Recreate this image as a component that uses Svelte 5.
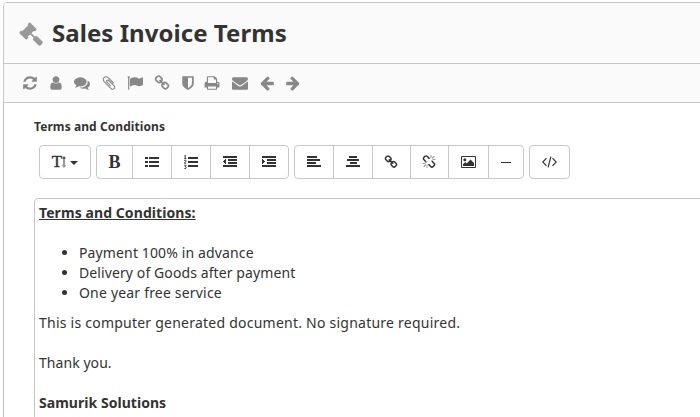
<script>
  const link = 'M1520 1216q0-40-28-68l-208-208q-28-28-68-28-42 0-72 32 3 3 19 18.5t21.5 21.5 15 19 13 25.5 3.5 27.5q0 40-28 68t-68 28q-15 0-27.5-3.5t-25.5-13-19-15-21.5-21.5-18.5-19q-33 31-33 73 0 40 28 68l206 207q27 27 68 27 40 0 68-26l147-146q28-28 28-67zm-703-705q0-40-28-68l-206-207q-28-28-68-28-39 0-68 27l-147 146q-28 28-28 67 0 40 28 68l208 208q27 27 68 27 42 0 72-31-3-3-19-18.5t-21.5-21.5-15-19-13-25.5-3.5-27.5q0-40 28-68t68-28q15 0 27.5 3.5t25.5 13 19 15 21.5 21.5 18.5 19q33-31 33-73zm895 705q0 120-85 203l-147 146q-83 83-203 83-121 0-204-85l-206-207q-83-83-83-203 0-123 88-209l-88-88q-86 88-208 88-120 0-204-84l-208-208q-84-84-84-204t85-203l147-146q83-83 203-83 121 0 204 85l206 207q83 83 83 203 0 123-88 209l88 88q86-88 208-88 120 0 204 84l208 208q84 84 84 204z';
  const arrow = 'M1664 896v128q0 53-32.5 90.5t-84.5 37.5h-704l293 294q38 36 38 90t-38 90l-75 76q-37 37-90 37-52 0-91-37l-651-652q-37-37-37-90 0-52 37-91l651-650q38-38 91-38 52 0 90 38l75 74q38 38 38 91t-38 91l-293 293h704q52 0 84.5 37.5t32.5 90.5z';
  const gavel = 'M1771 1536q0 53-37 90l-107 108q-39 37-91 37-53 0-90-37l-363-364q-38-36-38-90 0-53 43-96l-256-256-126 126q-14 14-34 14t-34-14q2 2 12.5 12t12.5 13 10 11.5 10 13.5 6 13.5 5.5 16.5 1.5 18q0 38-28 68-3 3-16.5 18t-19 20.5-18.5 16.5-22 15.5-22 9-26 4.5q-40 0-68-28l-408-408q-28-28-28-68 0-13 4.5-26t9-22 15.5-22 16.5-18.5 20.5-19 18-16.5q30-28 68-28 10 0 18 1.5t16.5 5.5 13.5 6 13.5 10 11.5 10 13 12.5 12 12.5q-14-14-14-34t14-34l348-348q14-14 34-14t34 14q-2-2-12.5-12t-12.5-13-10-11.5-10-13.5-6-13.5-5.5-16.5-1.5-18q0-38 28-68 3-3 16.5-18t19-20.5 18.5-16.5 22-15.5 22-9 26-4.5q40 0 68 28l408 408q28 28 28 68 0 13-4.5 26t-9 22-15.5 22-16.5 18.5-20.5 19-18 16.5q-30 28-68 28-10 0-18-1.5t-16.5-5.5-13.5-6-13.5-10-11.5-10-13-12.5-12-12.5q14 14 14 34t-14 34l-126 126 256 256q43-43 96-43 52 0 91 37l363 363q37 39 37 91z';
  const unlink = 'M503 1271l-256 256q-10 9-23 9-12 0-23-9-9-10-9-23t9-23l256-256q10-9 23-9t23 9q9 10 9 23t-9 23zm169 41v320q0 14-9 23t-23 9-23-9-9-23v-320q0-14 9-23t23-9 23 9 9 23zm-224-224q0 14-9 23t-23 9h-320q-14 0-23-9t-9-23 9-23 23-9h320q14 0 23 9t9 23zm1264 128q0 120-85 203l-147 146q-83 83-203 83-121 0-204-85l-334-335q-21-21-42-56l239-18 273 274q28 28 68 27.5t68-27.5l147-146q28-28 28-67 0-40-28-68l-274-275 18-239q35 21 56 42l336 336q84 86 84 204zm-617-724l-239 18-273-274q-28-28-68-28-39 0-68 27l-147 146q-28 28-28 67 0 40 28 68l274 274-18 240q-35-21-56-42l-336-336q-84-86-84-204 0-120 85-203l147-146q83-83 203-83 121 0 204 85l334 335q21 21 42 56zm633 84q0 14-9 23t-23 9h-320q-14 0-23-9t-9-23 9-23 23-9h320q14 0 23 9t9 23zm-544-544v320q0 14-9 23t-23 9-23-9-9-23v-320q0-14 9-23t23-9 23 9 9 23zm407 151l-256 256q-11 9-23 9t-23-9q-9-10-9-23t9-23l256-256q10-9 23-9t23 9q9 10 9 23t-9 23z';

  const actions = [
    { name: 'Refresh', d: 'M1639 1056q0 5-1 7-64 268-268 434.5t-478 166.5q-146 0-282.5-55t-243.5-157l-129 129q-19 19-45 19t-45-19-19-45v-448q0-26 19-45t45-19h448q26 0 45 19t19 45-19 45l-137 137q71 66 161 102t187 36q134 0 250-65t186-179q11-17 53-117 8-23 30-23h192q13 0 22.5 9.5t9.5 22.5zm25-800v448q0 26-19 45t-45 19h-448q-26 0-45-19t-19-45 19-45l138-138q-148-137-349-137-134 0-250 65t-186 179q-11 17-53 117-8 23-30 23h-199q-13 0-22.5-9.5t-9.5-22.5v-7q65-268 270-434.5t480-166.5q146 0 284 55.5t245 156.5l130-129q19-19 45-19t45 19 19 45z' },
    { name: 'Assign', d: 'M1536 1399q0 109-62.5 187t-150.5 78h-854q-88 0-150.5-78t-62.5-187q0-85 8.5-160.5t31.5-152 58.5-131 94-89 134.5-34.5q131 128 313 128t313-128q76 0 134.5 34.5t94 89 58.5 131 31.5 152 8.5 160.5zm-256-887q0 159-112.5 271.5t-271.5 112.5-271.5-112.5-112.5-271.5 112.5-271.5 271.5-112.5 271.5 112.5 112.5 271.5z' },
    { name: 'Comments', d: 'M1408 768q0 139-94 257t-256.5 186.5-353.5 68.5q-86 0-176-16-124 88-278 128-36 9-86 16h-3q-11 0-20.5-8t-11.5-21q-1-3-1-6.5t.5-6.5 2-6l2.5-5 3.5-5.5 4-5 4.5-5 4-4.5q5-6 23-25t26-29.5 22.5-29 25-38.5 20.5-44q-124-72-195-177t-71-224q0-139 94-257t256.5-186.5 353.5-68.5 353.5 68.5 256.5 186.5 94 257zm384 256q0 120-71 224.5t-195 176.5q10 24 20.5 44t25 38.5 22.5 29 26 29.5 23 25q1 1 4 4.5t4.5 5 4 5 3.5 5.5l2.5 5 2 6 .5 6.5-1 6.5q-3 14-13 22t-22 7q-50-7-86-16-154-40-278-128-90 16-176 16-271 0-472-132 58 4 88 4 161 0 309-45t264-129q125-92 192-212t67-254q0-77-23-152 129 71 204 178t75 230z' },
    { name: 'Attach', d: 'M1596 1385q0 117-79 196t-196 79q-135 0-235-100l-777-776q-113-115-113-271 0-159 110-270t269-111q158 0 273 113l605 606q10 10 10 22 0 16-30.5 46.5t-46.5 30.5q-13 0-23-10l-606-607q-79-77-181-77-106 0-179 75t-73 181q0 105 76 181l776 777q63 63 145 63 64 0 106-42t42-106q0-82-63-145l-581-581q-26-24-60-24-29 0-48 19t-19 48q0 32 25 59l410 410q10 10 10 22 0 16-31 47t-47 31q-12 0-22-10l-410-410q-63-61-63-149 0-82 57-139t139-57q88 0 149 63l581 581q100 98 100 235z' },
    { name: 'Flag', d: 'M320 256q0 72-64 110v1266q0 13-9.5 22.5t-22.5 9.5h-64q-13 0-22.5-9.5t-9.5-22.5v-1266q-64-38-64-110 0-53 37.5-90.5t90.5-37.5 90.5 37.5 37.5 90.5zm1472 64v763q0 25-12.5 38.5t-39.5 27.5q-215 116-369 116-61 0-123.5-22t-108.5-48-115.5-48-142.5-22q-192 0-464 146-17 9-33 9-26 0-45-19t-19-45v-742q0-32 31-55 21-14 79-43 236-120 421-120 107 0 200 29t219 88q38 19 88 19 54 0 117.5-21t110-47 88-47 54.5-21q26 0 45 19t19 45z' },
    { name: 'Links', d: link },
    { name: 'Permissions', d: 'M1344 960v-640h-448v1137q119-63 213-137 235-184 235-360zm192-768v768q0 86-33.5 170.5t-83 150-118 127.5-126.5 103-121 77.5-89.5 49.5-42.5 20q-12 6-26 6t-26-6q-16-7-42.5-20t-89.5-49.5-121-77.5-126.5-103-118-127.5-83-150-33.5-170.5v-768q0-26 19-45t45-19h1152q26 0 45 19t19 45z' },
    { name: 'Print', d: 'M448 1536h896v-256h-896v256zm0-640h896v-384h-160q-40 0-68-28t-28-68v-160h-640v640zm1152 64q0-26-19-45t-45-19-45 19-19 45 19 45 45 19 45-19 19-45zm128 0v416q0 13-9.5 22.5t-22.5 9.5h-224v160q0 40-28 68t-68 28h-960q-40 0-68-28t-28-68v-160h-224q-13 0-22.5-9.5t-9.5-22.5v-416q0-79 56.5-135.5t135.5-56.5h64v-544q0-40 28-68t68-28h672q40 0 88 20t76 48l152 152q28 28 48 76t20 88v256h64q79 0 135.5 56.5t56.5 135.5z' },
    { name: 'Email', d: 'M1792 710v794q0 66-47 113t-113 47h-1472q-66 0-113-47t-47-113v-794q44 49 101 87 362 246 497 345 57 42 92.5 65.5t94.5 48 110 24.5h2q51 0 110-24.5t94.5-48 92.5-65.5q170-123 498-345 57-39 100-87zm0-294q0 79-49 151t-122 123q-376 261-468 325-10 7-42.5 31t-54 38.5-52 32.5-57.5 27-50 9h-2q-23 0-50-9t-57.5-27-52-32.5-54-38.5-42.5-31q-91-64-262-182.5t-205-142.5q-62-42-117-115.5t-55-136.5q0-78 41.5-130t118.5-52h1472q65 0 112.5 47t47.5 113z' },
    { name: 'Previous', d: arrow },
    { name: 'Next', d: arrow, flip: true }
  ];
</script>

{#snippet glyph(d, flip = false)}
  <svg viewBox="0 0 1792 1792" class:flip aria-hidden="true"><path {d} /></svg>
{/snippet}

{#snippet lines(d)}
  <svg viewBox="0 0 16 16" class="small" aria-hidden="true" shape-rendering="crispEdges"><path {d} /></svg>
{/snippet}

<main class="form">
  <header class="title">
    {@render glyph(gavel)}
    <h1>Sales Invoice Terms</h1>
  </header>

  <nav class="actions">
    {#each actions as action}
      <a href="#top" aria-label={action.name}>{@render glyph(action.d, action.flip)}</a>
    {/each}
  </nav>

  <section class="body">
    <div class="label">Terms and Conditions</div>

    <div class="toolbar">
      <div class="group size">
        <button aria-label="Font size">
          <span class="letter">T</span>
          <svg class="height" viewBox="0 0 4 12" aria-hidden="true"><path d="M1.5 1h1v10h-1zM0 2.6 2 .2l2 2.4zM0 9.4l2 2.4 2-2.4z" /></svg>
          <span class="caret"></span>
        </button>
      </div>
      <div class="group text">
        <button class="letter bold">B</button>
        <button aria-label="Bullet list">{@render lines('M1 3h3v2H1zM1 7h3v2H1zM1 11h3v2H1zM5 3h10v2H5zM5 7h10v2H5zM5 11h10v2H5z')}</button>
        <button aria-label="Numbered list">
          <svg viewBox="0 0 16 16" class="small" aria-hidden="true">
            <path d="M5 3h10v2H5zM5 7h10v2H5zM5 11h10v2H5z" />
            <path class="digits" d="M1.2 2.1 2.3 1.3v3.2M1.1 4.6h2.3M1.2 7q.2-.8 1-.8 1 0 1 .8 0 .6-2 2.2h2.1M1.2 11.3h2L2 12.6q1.3 0 1.3 1 0 1-1.2 1-.7 0-1-.5" />
          </svg>
        </button>
        <button aria-label="Outdent">{@render lines('M1 2h14v2H1zM6 5h9v2H6zM6 8h9v2H6zM1 11h14v2H1zM1 7h1V6h1V5h1v5H3V9H2V8H1z')}</button>
        <button aria-label="Indent">{@render lines('M1 2h14v2H1zM6 5h9v2H6zM6 8h9v2H6zM1 11h14v2H1zM1 5h1v1h1v1h1v1H3v1H2v1H1z')}</button>
      </div>
      <div class="group insert">
        <button aria-label="Align left">{@render lines('M1 2h10v2H1zM1 5h13v2H1zM1 8h9v2H1zM1 11h14v2H1z')}</button>
        <button aria-label="Align center">{@render lines('M4 2h8v2H4zM2 5h12v2H2zM5 8h7v2H5zM1 11h14v2H1z')}</button>
        <button aria-label="Insert link">{@render glyph(link)}</button>
        <button aria-label="Remove link">{@render glyph(unlink)}</button>
        <button aria-label="Insert picture">
          <svg class="picture" viewBox="0 0 15 12" aria-hidden="true"><path fill-rule="evenodd" d="M1 0h13q1 0 1 1v10q0 1-1 1H1q-1 0-1-1V1q0-1 1-1zM1 1v10h13V1z" /><circle cx="3.8" cy="3.7" r="1.5" /><path d="M2 10V8.3l2.3-2.2 1.4 1.3L9.5 3.5 13 7v3z" /></svg>
        </button>
        <button aria-label="Horizontal rule"><span class="rule"></span></button>
      </div>
      <div class="group source">
        <button aria-label="Source">
          <svg class="code" viewBox="0 0 15 12" aria-hidden="true"><path d="M4.5 2.2.8 6l3.7 3.8M10.5 2.2 14.2 6l-3.7 3.8M8.9.7 6.1 11.3" /></svg>
        </button>
      </div>
    </div>

    <article class="editor">
      <b class="heading"><u>Terms and Conditions:</u></b>
      <br /><br />
      <ul>
        <li class="payment">Payment 100% in advance</li>
        <li class="delivery">Delivery of Goods after payment</li>
        <li class="service">One year free service</li>
      </ul>
      <span class="note">This is computer generated document. No signature required.</span>
      <br /><br />
      <span class="thanks">Thank you.</span>
      <br /><br />
      <b class="company">Samurik Solutions</b>
    </article>
  </section>
</main>

<style>
  :global(body) {
    margin: 0;
    background: #fff;
    overflow: hidden;
  }

  .form {
    box-sizing: border-box;
    width: 720px;
    height: 430px;
    margin: 2px 0 0 3px;
    border: 1px solid #c6c6c6;
    border-radius: 4px;
    overflow: hidden;
    color: #333;
    font: 14px/20px 'Noto Sans', sans-serif;
  }

  svg {
    display: block;
    width: 16px;
    height: 16px;
    fill: currentColor;
  }

  .flip {
    transform: scaleX(-1);
  }

  .title {
    display: flex;
    align-items: center;
    gap: 9px;
    height: 60px;
    padding-left: 15px;
    background: #fafafa;
    border-bottom: 1px solid #c6c6c6;
  }

  .title svg {
    width: 24px;
    height: 24px;
    margin-top: 1px;
    color: #999;
  }

  h1 {
    margin: 0;
    font-size: 24px;
    line-height: 30px;
    font-weight: 700;
    letter-spacing: 0.05px;
  }

  .actions {
    display: grid;
    box-sizing: border-box;
    grid-template-columns: 25.5px 26.5px 26.5px 26.5px 27px 25.5px 24.5px 27.5px 27.5px 25.5px 16px;
    align-items: center;
    height: 39px;
    padding: 0 0 1px 18px;
    background: #fafafa;
    border-bottom: 1px solid #c6c6c6;
  }

  .actions a {
    color: #888;
  }

  .body {
    padding: 15px 0 0 30px;
  }

  .label {
    font-size: 12px;
    line-height: 18px;
    font-weight: 700;
    letter-spacing: 0.08px;
  }

  .toolbar {
    display: flex;
    gap: 5px;
    margin: 9px 0 19px 5px;
  }

  .group {
    display: grid;
    box-sizing: border-box;
    height: 34px;
    border: 1px solid #c8c8c8;
    border-radius: 4px;
  }

  .size { grid-template-columns: 50px; }
  .text { grid-template-columns: 35px 39px 39px 39px 39px; }
  .insert { grid-template-columns: 38px 39px 38px 38px 40px 35px; }
  .source { grid-template-columns: 39px; }

  button {
    display: flex;
    align-items: center;
    justify-content: center;
    box-sizing: border-box;
    padding: 0;
    border: 0;
    background: none;
    color: #333;
  }

  button + button {
    border-left: 1px solid #c8c8c8;
    padding-right: 1px;
  }

  button svg {
    width: 14px;
    height: 14px;
  }

  button .small {
    width: 16px;
    height: 16px;
  }

  .letter {
    font: 17px/20px 'Liberation Serif', serif;
    -webkit-text-stroke: 0.4px currentColor;
  }

  .bold {
    font-weight: 700;
    font-size: 18px;
    -webkit-text-stroke: 0;
  }

  button .height {
    width: 4px;
    height: 12px;
  }

  .caret {
    margin: 1px 0 0 4px;
    border: 4px solid transparent;
    border-top-color: currentColor;
    border-bottom: 0;
  }

  .digits {
    fill: none;
    stroke: currentColor;
    stroke-width: 0.9;
  }

  button .picture {
    width: 15px;
    height: 12px;
  }

  .rule {
    width: 10px;
    height: 1px;
    background: currentColor;
  }

  button .code {
    width: 15px;
    height: 12px;
    fill: none;
    stroke: currentColor;
    stroke-width: 1.2;
  }

  .editor {
    box-sizing: border-box;
    width: 700px;
    height: 300px;
    padding: 4px;
    border: 1px solid #c6c6c6;
    border-radius: 4px;
  }

  .heading { letter-spacing: 0.08px; }
  .payment { letter-spacing: 0.13px; }
  .delivery { letter-spacing: 0.1px; }
  .service { letter-spacing: 0.19px; }
  .note { letter-spacing: 0.235px; }
  .thanks { letter-spacing: 0.06px; }
  .company { letter-spacing: 0.04px; }

  ul {
    margin: 0 0 10px;
    padding-left: 40px;
  }
</style>
